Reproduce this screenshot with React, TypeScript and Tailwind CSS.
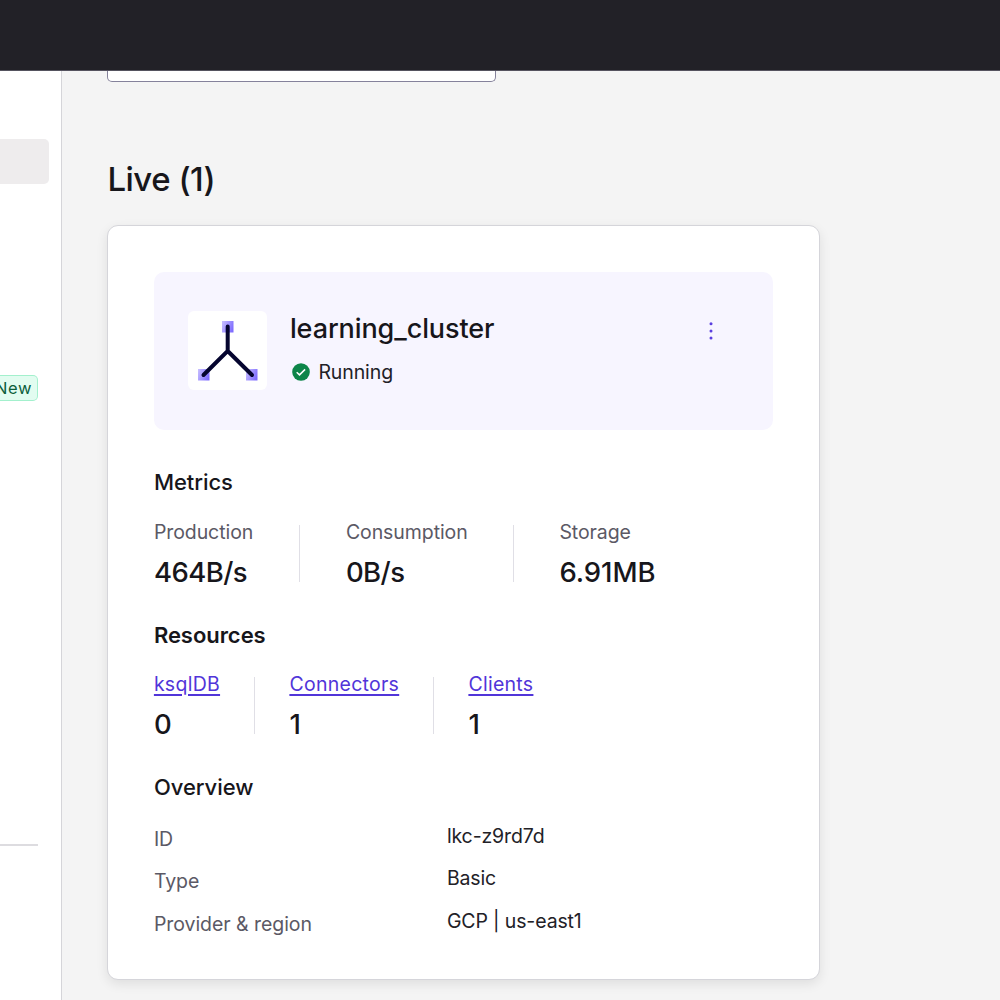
const heading = "relative -top-px text-[22px] leading-7 text-[#17161b] tracking-[-0.05px]";

type StatProps = { label: string; value: string; link?: boolean; className: string; valueClass?: string };

function Stat({ label, value, link, className, valueClass = "tracking-[-0.55px]" }: StatProps) {
  return (
    <div className={"h-[57px] " + className}>
      <div
        className={
          link
            ? "mt-[-4px] text-[19.5px] leading-[22px] tracking-[0.28px] whitespace-nowrap text-[#5135d9] underline decoration-[1.5px] underline-offset-[3px]"
            : "mt-[-4px] text-[19.5px] leading-[22px] tracking-[-0.08px] whitespace-nowrap text-[#5b5965]"
        }
      >
        {label}
      </div>
      <div className={"mt-[12px] text-[27.5px] leading-[34px] font-medium text-[#17161b] " + valueClass}>{value}</div>
    </div>
  );
}

function Row({ label, value }: { label: string; value: string }) {
  return (
    <div className="flex h-[42.3px] text-[19.5px] leading-[24px]">
      <div className="w-[293px] pt-[3px] tracking-[-0.05px] text-[#5b5965]">{label}</div>
      <div className="tracking-[-0.13px] text-[#222127]">{value}</div>
    </div>
  );
}

export default function App() {
  return (
    <div className="h-[1000px] w-[1000px] overflow-hidden bg-[#f4f4f4] font-['Inter',sans-serif]">
      <header className="h-[70.5px] border-b border-[#55535f] bg-[#222127]" />
      <div className="flex h-[929.5px]">
        <aside className="w-[62px] shrink-0 overflow-hidden border-r border-[#d5d5d9] bg-white pt-[68.5px]">
          <div className="h-[45px] w-[49px] rounded-r-[5px] bg-[#eeeced]" />
          <div className="mt-[191px] flex h-[26px] w-[38px] items-center justify-end rounded-r-[5px] border-[1.5px] border-l-0 border-[#a3f0cd] bg-[#e2fcf0] pt-px pr-[5px] text-[16.5px] tracking-[0.6px] text-[#0d5f3c]">
            New
          </div>
          <div className="mt-[443px] h-[1.5px] w-[38px] bg-[#dddce0]" />
        </aside>
        <main className="pl-[45.4px]">
          <div className="h-[11.5px] w-[389px] rounded-b-[5px] border-[1.5px] border-t-0 border-[#85829b] bg-white" />
          <h1 className="mt-[77px] text-[33px] leading-10 font-medium tracking-[-0.5px] text-[#17161b]">Live (1)</h1>
          <section className="mt-[26px] h-[755px] w-[712.5px] rounded-[11px] border border-[#d5d5da] bg-white pt-[46px] pl-[45.5px] shadow-[0_4px_12px_rgba(0,0,0,0.09)]">
            <div className="flex h-[158px] w-[619.5px] rounded-[10px] bg-[#f7f5ff] pt-[39px] pl-[34px]">
              <div className="size-[79px] rounded-[6px] bg-white">
                <svg viewBox="0 0 79 79" className="size-[79px]">
                  <defs>
                    <linearGradient id="node" x1="0" y1="0.2" x2="1" y2="0.6">
                      <stop stopColor="#c5bcff" />
                      <stop offset="1" stopColor="#7e6cff" />
                    </linearGradient>
                  </defs>
                  <rect x="34" y="10" width="11.500" height="11.500" fill="url(#node)" />
                  <rect x="10" y="58" width="11.500" height="11.500" fill="url(#node)" />
                  <rect x="58" y="58" width="11.500" height="11.500" fill="url(#node)" />
                  <path d="M39.700 15.500V40L15.500 64M39.700 40l24.300 24" fill="none" stroke="#05052f" strokeWidth="4" strokeLinecap="round" />
                </svg>
              </div>
              <div className="ml-[23px] w-[410px]">
                <div className="text-[27px] leading-9 font-medium tracking-[-0.09px] text-[#17161b]">learning_cluster</div>
                <div className="mt-[13px] ml-[2.5px] flex h-6 items-center gap-2 text-[19.5px] tracking-[-0.1px] text-[#222127]">
                  <svg viewBox="0 0 18 18" className="size-[18px]">
                    <circle cx="9" cy="9" r="8.800" fill="#0d8549" />
                    <path d="M4.700 9.200l2.800 2.700 5.600-5.500" fill="none" stroke="white" strokeWidth="1.500" />
                  </svg>
                  <span className="pt-[2px]">Running</span>
                </div>
              </div>
              <svg viewBox="0 0 4 20" className="mt-[10px] ml-[9.5px] h-5 w-1 fill-[#5a3fe0]">
                <circle cx="2" cy="2.800" r="1.500" />
                <circle cx="2" cy="9.900" r="1.500" />
                <circle cx="2" cy="17" r="1.500" />
              </svg>
            </div>
            <h2 className={heading + " mt-[39px] font-medium"}>Metrics</h2>
            <div className="mt-[28px] flex">
              <Stat label="Production" value="464B/s" className="w-[146px] border-r border-[#e0dfe6]" />
              <Stat label="Consumption" value="0B/s" className="w-[214px] border-r border-[#e0dfe6] pl-[46px]" />
              <Stat label="Storage" value="6.91MB" className="pl-[45.500px]" valueClass="tracking-[-0.05px]" />
            </div>
            <h2 className={heading + " mt-[40px] font-semibold"}>Resources</h2>
            <div className="mt-[27px] flex">
              <Stat link label="ksqlDB" value="0" className="w-[101px] border-r border-[#e0dfe6]" />
              <Stat link label="Connectors" value="1" className="w-[179px] border-r border-[#e0dfe6] pl-[34.500px]" />
              <Stat link label="Clients" value="1" className="pl-[34.500px]" />
            </div>
            <h2 className={heading + " mt-[40px] font-medium"}>Overview</h2>
            <div className="mt-[22px]">
              <Row label="ID" value="lkc-z9rd7d" />
              <Row label="Type" value="Basic" />
              <Row label="Provider & region" value="GCP | us-east1" />
            </div>
          </section>
        </main>
      </div>
    </div>
  );
}
